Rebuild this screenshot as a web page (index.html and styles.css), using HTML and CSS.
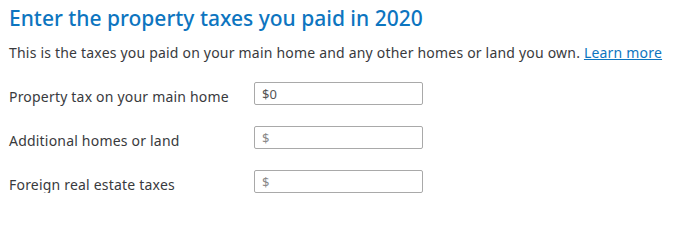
FILE: index.html
```html
<!DOCTYPE html>
<html>
<head>
<meta charset="utf-8">
<link rel="stylesheet" href="styles.css">
</head>
<body>
<div class="page">
  <h1 class="title">Enter the property taxes you paid in 2020</h1>
  <p class="intro">This is the taxes you paid on your main home and any other homes or land you own. <a class="link" href="#">Learn more</a></p>
  <div class="rows">
    <div class="row">
      <label class="label">Property tax on your main home</label>
      <input class="field" type="text" value="$0">
    </div>
    <div class="row">
      <label class="label">Additional homes or land</label>
      <input class="field" type="text" placeholder="$">
    </div>
    <div class="row">
      <label class="label">Foreign real estate taxes</label>
      <input class="field" type="text" placeholder="$">
    </div>
  </div>
</div>
</body>
</html>
```
FILE: styles.css
```css
html, body {
  margin: 0;
  padding: 0;
  background: #ffffff;
}
.page {
  padding: 0 0 0 9px;
  font-family: "Noto Sans", sans-serif;
  color: #393a3d;
}
.title {
  margin: 0;
  padding-top: 4px;
  font-size: 21px;
  line-height: 28px;
  font-weight: 500;
  color: #0d75c0;
}
.intro {
  margin: 12px 0 0 0;
  font-size: 14px;
  line-height: 18px;
  letter-spacing: 0.2px;
}
.link {
  color: #0d75c0;
  text-decoration: underline;
}
.rows {
  margin-top: 20px;
  display: flex;
  flex-direction: column;
  gap: 21px;
}
.row {
  display: flex;
  align-items: center;
  height: 23px;
}
.label {
  width: 245px;
  font-size: 14px;
  letter-spacing: 0.2px;
  padding-top: 6px;
}
.field {
  box-sizing: border-box;
  width: 169px;
  height: 23px;
  margin: 0;
  border: 1px solid #a9a9a9;
  border-radius: 2px;
  padding: 0 7px;
  font-family: "Noto Sans", sans-serif;
  font-size: 13px;
  color: #555;
  outline: none;
}
.field::placeholder {
  color: #8a8a8a;
}
```
